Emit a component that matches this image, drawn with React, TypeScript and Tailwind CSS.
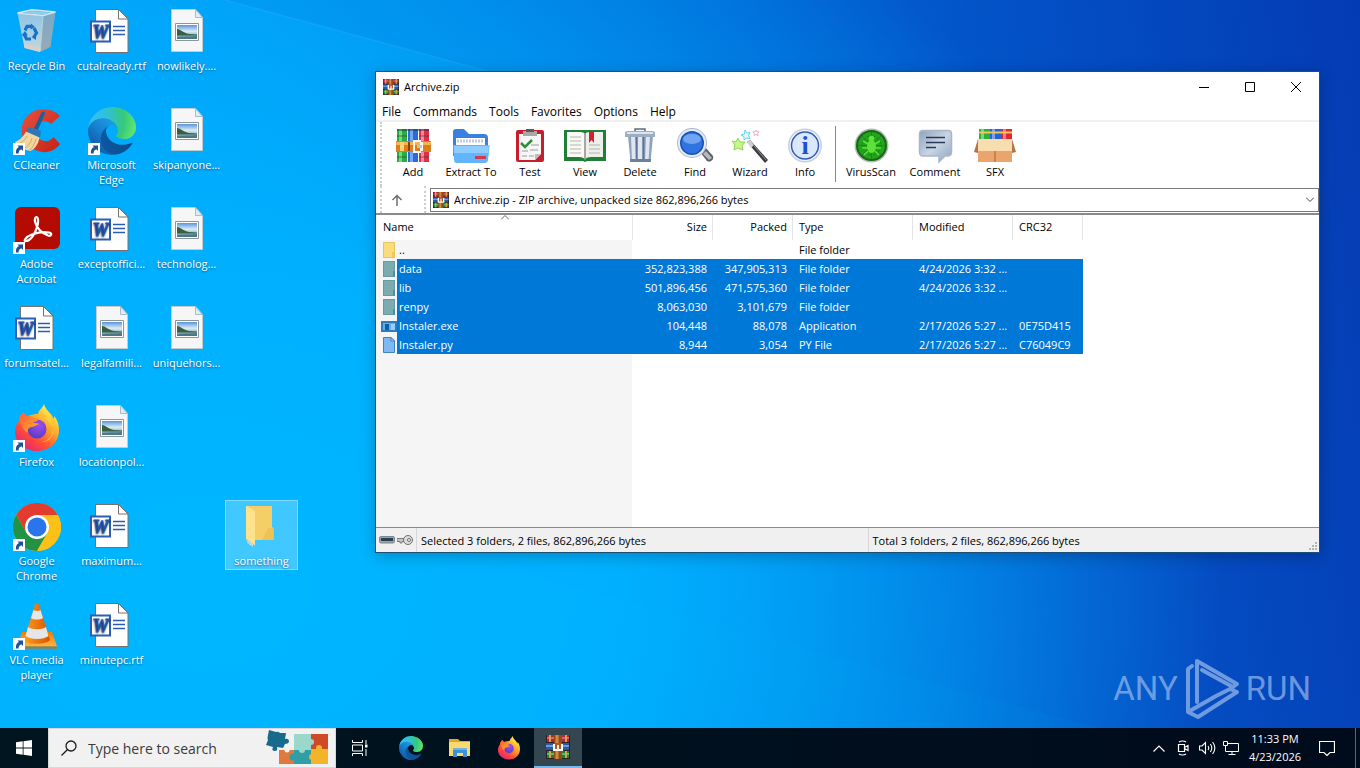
import clsx from "clsx";
import type { ReactNode } from "react";

function Shortcut() {
  return (
    <g>
      <rect x="0" y="36" width="12" height="12" fill="#fff" />
      <path d="M3 46.500c-.5-3 .5-5.500 3-6.500L4.500 38.500H10V44L8.300 42.300C6.500 43 5.500 44.500 5.600 46.500z" fill="#1f5196" />
    </g>
  );
}

function Icon48({ children, shortcut }: { children: ReactNode; shortcut?: boolean }) {
  return (
    <svg viewBox="0 0 48 48" className="h-12 w-12 shrink-0" aria-hidden="true">
      {children}
      {shortcut && <Shortcut />}
    </svg>
  );
}

function RecycleBinIcon() {
  return (
    <Icon48>
      <defs>
        <linearGradient id="binL" x1="0" y1="0" x2="0" y2="1">
          <stop offset="0" stopColor="#8fc4e4" />
          <stop offset="1" stopColor="#c7d6dc" />
        </linearGradient>
        <linearGradient id="binR" x1="0" y1="0" x2="0" y2="1">
          <stop offset="0" stopColor="#79a9c8" />
          <stop offset="1" stopColor="#9aaab3" />
        </linearGradient>
      </defs>
      <path d="M4.500 5 30 7.500 27 44 11.500 40z" fill="url(#binL)" />
      <path d="M30 7.500 42.500 4 37.500 39 27 44z" fill="url(#binR)" />
      <path d="M4.500 5 19 1.800 42.500 4 30 7.500z" fill="#64b0de" stroke="#d6e6ee" strokeWidth="1.400" />
      <path d="M8 5.200 19 3l18 1.500-7 2z" fill="#8ccdf0" />
      <path d="M11 36 27.500 40 27 44 11.500 40z" fill="#dcd0c8" opacity=".8" />
      <path d="M30 8 27.200 43" stroke="#d6e6ee" strokeWidth="1" opacity=".7" />
      <g fill="none" stroke="#0f74d0" strokeWidth="3.200">
        <path d="M12 22.500 14 18.300h5" />
        <path d="M21 20l2.500 5-2.500 4" />
        <path d="M18 31h-4.500l-2.500-5" />
      </g>
      <path d="m18 15.500 4 3.500-4.500 2.500zM23 26v6l-4.500-3zM8.500 27.500 12 23l3 4.500z" fill="#0f74d0" />
    </Icon48>
  );
}

function WordIcon() {
  return (
    <Icon48>
      <path d="M7.500 1.500h23l9.500 9v34h-32.500z" fill="#fff" stroke="#77706c" />
      <path d="M30.500 1.500v9.500h9.500z" fill="#fff" stroke="#77706c" />
      <path d="M25 18.500h12M25 22.500h12M25 26.500h12" stroke="#2a5cb0" strokeWidth="1.300" />
      <path d="M2 12.500h21v22H2z" fill="#2b5eb5" />
      <path d="M4 14.500h17v18H4z" fill="#fff" />
      <text x="12.500" y="30" textAnchor="middle" fontSize="18" fontWeight="bold" fontStyle="italic" fontFamily="Liberation Serif, serif" fill="#2456b0" stroke="#2456b0" strokeWidth="1">W</text>
    </Icon48>
  );
}

function PictureIcon() {
  return (
    <Icon48>
      <defs>
        <linearGradient id="sky" x1="0" y1="0" x2="0" y2="1">
          <stop offset="0" stopColor="#5b94dc" />
          <stop offset=".45" stopColor="#dcecf6" />
          <stop offset=".65" stopColor="#a4c6d8" />
          <stop offset="1" stopColor="#4d7c94" />
        </linearGradient>
      </defs>
      <path d="M8.500 1.500h24l7 8v34h-31z" fill="#f6f6f6" stroke="#c4ccd0" />
      <path d="M32.500 1.500v8h7z" fill="#dceefa" stroke="#a9bcc8" />
      <path d="M12.500 15.500h23v17h-23z" fill="#fff" stroke="#8b969c" />
      <path d="M14 17h20v14H14z" fill="url(#sky)" />
      <path d="M14 21c4 .5 6 4 12 5l8 .5v1H14z" fill="#37603f" />
      <path d="M14 29.500c6-1.500 12-.5 20-1.500v3H14z" fill="#4b7884" />
    </Icon48>
  );
}

function CCleanerIcon() {
  return (
    <Icon48 shortcut>
      <defs>
        <linearGradient id="ccRed" x1="0" y1="0" x2="1" y2="1">
          <stop offset="0" stopColor="#e8513d" />
          <stop offset="1" stopColor="#c42218" />
        </linearGradient>
      </defs>
      <path d="M47 9 38 17c-5-5-13-3-15 4-1.500 8 5 14 11 13 3-.5 5-2 6.500-4L47 37c-5 7-14 10-22 7C13 40 7 30 9 19 12 6 23 1 34 2.500c5 .5 10 3 13 6.500z" fill="url(#ccRed)" />
      <path d="M28.500 5.500c1-2 4-1 3.500 1L25 23l-4-1.500z" fill="#1d5f9c" />
      <path d="m16 20 12 4-1 7-14-6z" fill="#2b78b8" />
      <path d="m13 24.500 13.500 6c-1 6-4 11-9 13.500C12 43 5 40 2 35c5-2 8-5 11-10.500z" fill="#f3d5a0" />
      <path d="M14 29c-2 4-5 6-8 8M19 31c-1 5-4 8-7 10M23 32c-1 4-3 8-6 11" stroke="#d9aa60" fill="none" />
    </Icon48>
  );
}

function EdgeMark() {
  return (
    <>
      <defs>
        <linearGradient id="edgeA" x1="63" y1="178" x2="242" y2="178" gradientUnits="userSpaceOnUse">
          <stop offset="0" stopColor="#0c59a4" />
          <stop offset="1" stopColor="#114a8b" />
        </linearGradient>
        <linearGradient id="edgeB" x1="157" y1="100" x2="46" y2="222" gradientUnits="userSpaceOnUse">
          <stop offset="0" stopColor="#1b9de2" />
          <stop offset=".5" stopColor="#1680cf" />
          <stop offset="1" stopColor="#0f5fae" />
        </linearGradient>
        <radialGradient id="edgeC" cx="30" cy="70" r="240" gradientUnits="userSpaceOnUse">
          <stop offset="0" stopColor="#35c1f1" />
          <stop offset=".3" stopColor="#2fc0e0" />
          <stop offset=".7" stopColor="#36c97b" />
          <stop offset="1" stopColor="#66eb6e" />
        </radialGradient>
      </defs>
      <g transform="translate(-4.63 -4.92)">
        <path d="M235.680 195.460a93.730 93.730 0 0 1-10.540 4.710 101.870 101.870 0 0 1-35.900 6.460c-47.320 0-88.540-32.550-88.540-74.320A31.480 31.480 0 0 1 117.130 105c-42.800 1.800-53.800 46.400-53.800 72.530 0 73.880 68.090 81.370 82.760 81.370 7.910 0 19.840-2.300 27-4.560l1.310-.44a128.340 128.340 0 0 0 66.600-52.800 4 4 0 0 0-5.320-5.640Z" fill="url(#edgeA)" />
        <path d="M110.340 246.340A79.200 79.200 0 0 1 87.600 225a80.720 80.720 0 0 1 29.530-120c3.120-1.470 8.450-4.130 15.540-4a32.350 32.350 0 0 1 25.690 13 31.880 31.880 0 0 1 6.360 18.660c0-.21 24.460-79.600-80-79.600-43.900 0-80 41.660-80 78.210a130.150 130.150 0 0 0 12.110 56 128 128 0 0 0 156.380 67.110 75.550 75.550 0 0 1-62.780-8Z" fill="url(#edgeB)" />
        <path d="M156.940 153.780c-.81 1.050-3.300 2.500-3.300 5.660 0 2.610 1.700 5.120 4.720 7.230 14.380 10 41.490 8.680 41.560 8.680a59.560 59.560 0 0 0 30.270-8.350 61.380 61.380 0 0 0 30.430-52.880c.26-22.410-8-37.310-11.340-43.910C228.090 28.760 182.350 4.920 132.610 4.920a128 128 0 0 0-128 126.200c.48-36.540 36.800-66.050 80-66.050 3.500 0 23.460.34 42 10.070 16.340 8.580 24.900 18.940 30.850 29.210 6.180 10.670 7.280 24.150 7.280 29.520s-2.740 13.330-7.800 19.910Z" fill="url(#edgeC)" />
      </g>
    </>
  );
}

function EdgeIcon() {
  return (
    <Icon48 shortcut>
      <g transform="scale(.1875)">
        <EdgeMark />
      </g>
    </Icon48>
  );
}

function AcrobatIcon() {
  return (
    <Icon48 shortcut>
      <rect x="2" y="1" width="45" height="42" rx="6" fill="#b30b00" />
      <path d="M13 35c-3 1-1-4 6-6.500 6-2 12-3 17-2 4 1 2 4-1 3-6-2-12-8-13-14-.8-5 2.500-6 3-2 .8 6-4 17-9 20.500-1.200.8-2 1-3 1z" fill="none" stroke="#fff" strokeWidth="2.200" strokeLinejoin="round" />
    </Icon48>
  );
}

function FirefoxMark() {
  return (
    <>
      <defs>
        <linearGradient id="fxBody" x1=".85" y1=".1" x2=".2" y2="1">
          <stop offset="0" stopColor="#fff04a" />
          <stop offset=".35" stopColor="#ffa62b" />
          <stop offset=".65" stopColor="#ff5033" />
          <stop offset="1" stopColor="#e61e7c" />
        </linearGradient>
        <radialGradient id="fxCore" cx=".6" cy=".3" r=".8">
          <stop offset="0" stopColor="#a24bf0" />
          <stop offset="1" stopColor="#4a3ec0" />
        </radialGradient>
        <linearGradient id="fxHead" x1="0" y1="0" x2="1" y2="1">
          <stop offset="0" stopColor="#ff5a36" />
          <stop offset="1" stopColor="#ffb52b" />
        </linearGradient>
      </defs>
      <path d="M31 0c-1 4-5 5-6 10-6 0-9 2-11 2-3-1-3-3-3-4-4 3-5 6-5 9-3 3-4 8-4 11 0 11 10 19 22 19 13 0 22-9 22-21 0-6-2-11-5-14 0 2 0 2-.5 3C39 9 33 7 31 0z" fill="url(#fxBody)" />
      <circle cx="24" cy="25" r="9.500" fill="url(#fxCore)" />
      <path d="M7 17c0-4 2-7 4-9 1 3 3 4 5 4 3 1 6 1 9 5-2 0-4 1-5 2 3 0 5 0 6 1-3 1-5 3-8 3-3 1-4 3-3 6-5-3-7-8-8-12z" fill="url(#fxHead)" />
      <path d="M31 0c-2 6 9 13 9 25 0 9-8 14-15 13 10 2 17-6 15-14-1-6-6-9-9-11 2 0 5 1 7 4C35 11 27 8 31 0z" fill="#ffe04a" opacity=".7" />
    </>
  );
}

function FirefoxIcon() {
  return (
    <Icon48 shortcut>
      <FirefoxMark />
    </Icon48>
  );
}

function ChromeIcon() {
  return (
    <Icon48 shortcut>
      <circle cx="24" cy="24" r="24" fill="#fbc116" />
      <path d="M24 24 44.800 12A24 24 0 0 0 3.200 12l10.400 18z" fill="#e33b2e" />
      <path d="M3.200 12A24 24 0 0 0 24 48l10.400-18L24 24 13.600 30z" fill="#229342" />
      <path d="M24 12h20.800A24 24 0 0 1 24 48l10.400-18z" fill="#fbc116" />
      <circle cx="24" cy="24" r="12" fill="#fff" />
      <circle cx="24" cy="24" r="9.500" fill="#2a74ec" />
    </Icon48>
  );
}

function VlcIcon() {
  return (
    <Icon48 shortcut>
      <defs>
        <linearGradient id="vlcBase" x1="0" y1="0" x2="0" y2="1">
          <stop offset="0" stopColor="#f47b00" />
          <stop offset="1" stopColor="#ffb53a" />
        </linearGradient>
        <linearGradient id="vlcCone" x1="0" y1="0" x2="1" y2="0">
          <stop offset="0" stopColor="#ff9c1f" />
          <stop offset="1" stopColor="#d95300" />
        </linearGradient>
      </defs>
      <path d="M9 30h30l5 14.500H4z" fill="url(#vlcBase)" />
      <path d="M4 44.500h40V46.500H4z" fill="#d06a0c" />
      <path d="M22 2.500c1-1.500 3-1.500 4 0L37 38c-5 5-21 5-26 0z" fill="url(#vlcCone)" />
      <path d="m20.500 8-2.500 8c3 2 9 2 12 0L27.500 8c-2 1.200-5 1.200-7 0zM15 25l-2.500 9c5 4 18 4 23 0L33 25c-4 3-14 3-18 0z" fill="#e6e6e6" />
    </Icon48>
  );
}

function FolderIcon() {
  return (
    <Icon48>
      <path d="M8 3h26v21l1.500 1v12H16z" fill="#f4cf68" />
      <path d="M30 25h5.500v12H24z" fill="#eec257" />
      <path d="m8 3 9 5v34.500L8 36z" fill="#ffe28c" />
      <path d="M8.500 37 15 41v3l-2-2-1 1-1-3-1 1z" fill="#bfdcf0" />
    </Icon48>
  );
}

// Three stacked books with a belt, shared by the title bar, address bar and taskbar.
function WinRarIcon({ className }: { className: string }) {
  return (
    <svg viewBox="0 0 24 24" className={className} aria-hidden="true">
      <path d="M0 0h24v24H0z" fill="#2a2026" />
      <path d="M1 0h22v7H1z" fill="#b0263c" />
      <path d="M1 2h22v2H1z" fill="#e0607a" />
      <path d="M0 8h23v7H0z" fill="#2c58a8" />
      <path d="M0 10h23v2H0z" fill="#6d9be0" />
      <path d="M1 16h22v7H1z" fill="#237f38" />
      <path d="M1 18h22v2H1z" fill="#55bd62" />
      <path d="M3 0h2v7H3zM19 0h2v7h-2zM3 16h2v7H3zM19 16h2v7h-2z" fill="#d9a33a" />
      <path d="M8 0h8v24H8z" fill="#8f4a1f" />
      <path d="M9.500 0h3v24h-3z" fill="#d48a3c" />
      <path d="M7 9h2v6H7zM15 9h2v6h-2zM7 14h10v2H7z" fill="#fff" />
      <path d="M9 8h6v6H9z" fill="#a85a28" />
      <path d="M11 10h2v5h-2z" fill="#ffe9c0" />
    </svg>
  );
}

function ToolIcon({ children }: { children: ReactNode }) {
  return (
    <svg viewBox="0 0 40 36" className="h-9 w-10" aria-hidden="true">
      {children}
    </svg>
  );
}

const toolbar = [
  {
    label: "Add",
    width: "w-[54px]",
    icon: (
      <ToolIcon>
        <path d="M4 1h10v33H4z" fill="#2fa846" />
        <path d="M6 1h3v33H6z" fill="#6fdc77" />
        <path d="M15 1h10v33H15z" fill="#2c6ad8" />
        <path d="M17 1h3v33h-3z" fill="#74aaf5" />
        <path d="M26 1h10v33H26z" fill="#e02e4a" />
        <path d="M28 1h3v33h-3z" fill="#ff8a9b" />
        <path d="M4 2h32" stroke="#1d2a3a" strokeOpacity=".45" strokeWidth="2" />
        <path d="M4 8h10M26 8h10M4 29h10M26 29h10" stroke="#17452a" strokeOpacity=".4" strokeWidth="1.500" />
        <path d="M3 13h35v11H3z" fill="#d9801c" />
        <path d="M3 14h35v3H3z" fill="#f6b550" />
        <path d="M7 14h4v9H7z" fill="#ffd27a" />
        <path d="M20 12h8v2h-6v9h6v2h-8zM27 14h3v9h-3z" fill="#f7f7f7" />
        <path d="M24 17h5v3h-5z" fill="#c4c4c4" />
        <path d="M15 14h2v9h-2z" fill="#8a3f0b" />
      </ToolIcon>
    ),
  },
  {
    label: "Extract To",
    width: "w-[62px]",
    icon: (
      <ToolIcon>
        <path d="M2 4q0-3 3-3h8l5 5h15q4 0 4 4v18H2z" fill="#3b7fe0" />
        <path d="M5 10h29v10H5z" fill="#fff" />
        <path d="M6 13h27" stroke="#bfcbd8" strokeWidth="3" strokeDasharray="2 1" />
        <path d="M2 17h35q2 0 1.500 2L37 32q-.4 3-3 3H6q-3 0-3-3z" fill="#63b4fa" />
        <path d="M3 18h35l-.8 7H3z" fill="#8fccff" />
        <path d="M24 28h11v3H24z" fill="#d8384c" />
      </ToolIcon>
    ),
  },
  {
    label: "Test",
    width: "w-[56px]",
    icon: (
      <ToolIcon>
        <rect x="6" y="2" width="28" height="32" rx="2" fill="#c81e2c" />
        <path d="M9 6h22v20l-6 6H9z" fill="#f6f6f6" />
        <path d="M31 26h-6v6z" fill="#bdbdbd" />
        <path d="M13 3h14v5H13z" fill="#a8a8a8" />
        <path d="M16 1h8v3h-8z" fill="#5a5a5a" />
        <path d="m11 15 4 4 7-7" stroke="#2d8d38" strokeWidth="2.500" fill="none" />
        <path d="M21 17h8M12 23h6M20 22h8M12 28h5M19 28h5" stroke="#9a9a9a" />
      </ToolIcon>
    ),
  },
  {
    label: "View",
    width: "w-[54px]",
    icon: (
      <svg viewBox="0 0 44 36" className="h-9 w-11" aria-hidden="true">
        <path d="M1 2h42v31H24l-2 1-2-1H1z" fill="#1e7f37" />
        <path d="M4 4h13q5 0 5 3v24q-2-2-6-2H4z" fill="#f9f9f6" />
        <path d="M40 4H27q-5 0-5 3v24q2-2 6-2h12z" fill="#efefea" />
        <path d="M22 6v26" stroke="#8e8e88" strokeWidth="1.500" />
        <path d="M7 9h11M7 13h11M7 17h11M7 21h11M7 25h11M26 17h11M26 21h11M26 25h11" stroke="#b4b4ae" />
        <path d="M26 3h5v12l-2.500-3L26 15z" fill="#cf2231" />
      </svg>
    ),
  },
  {
    label: "Delete",
    width: "w-[56px]",
    icon: (
      <ToolIcon>
        <path d="M8 8h25l-2.500 26h-20z" fill="#8fa2bc" />
        <path d="M11 8h4l1 26h-4zM18 8h4v26h-4zM26 8h4l-1.500 26H25z" fill="#dde6f1" />
        <path d="M16.500 9v24M23.500 9v24" stroke="#5f7390" strokeWidth="1.500" />
        <path d="M5 5q0-2 3-2h24q3 0 3 2v4H5z" fill="#9daec4" />
        <path d="M7 4h26v2H7z" fill="#dce4ee" />
        <path d="M15 3V1h10v2" stroke="#5f6b7c" strokeWidth="1.500" fill="none" />
        <path d="M10 31h21l-.4 3H10.400z" fill="#6b7f9b" />
      </ToolIcon>
    ),
  },
  {
    label: "Find",
    width: "w-[54px]",
    icon: (
      <ToolIcon>
        <path d="m25 24 5-5 8 9q1 3-2 5-2 1-4 0z" fill="#5c5f66" />
        <path d="m28 26 3-3 6 7-3 2z" fill="#b5bac2" />
        <circle cx="17" cy="15" r="15" fill="#a9b9cf" />
        <circle cx="17" cy="15" r="14" fill="#e6edf5" />
        <circle cx="17" cy="15" r="12" fill="#1d4fb8" />
        <circle cx="17" cy="15" r="10.500" fill="#2f74e0" />
        <ellipse cx="17" cy="11" rx="9" ry="5" fill="#86b5f7" opacity=".75" />
      </ToolIcon>
    ),
  },
  {
    label: "Wizard",
    width: "w-[56px]",
    icon: (
      <ToolIcon>
        <path d="m17 14 3-2 18 20-3 3z" fill="#3c3c40" />
        <path d="m17 14 3-2 4 5-3 3z" fill="#d0d0d4" />
        <path d="m24 18 12 14" stroke="#8c8c92" />
        <path d="m8 10 2 4 5 0-3 4 1 4-5-2-4 2 1-5-3-4 4 1z" fill="#c9f58a" stroke="#8ed455" />
        <path d="m15 2 1.500 3 3.500-.5-1.500 3 1.500 3-3.500-.5-2.500 2v-3.500l-3-1.500 3.500-1z" fill="#e4f9ff" stroke="#63d2ef" />
        <path d="m26 2 .8 1.800 2.200 0-1.500 1.700.7 2.200-2.200-1.200-1.700 1 0-2.300-1.500-1.400 2.300 0z" fill="#fff" stroke="#ecaeb6" />
      </ToolIcon>
    ),
  },
  {
    label: "Info",
    width: "w-[54px]",
    icon: (
      <ToolIcon>
        <circle cx="20" cy="17.500" r="17" fill="#c3cfe2" />
        <circle cx="20" cy="17.500" r="15.500" fill="#eef4fc" />
        <circle cx="20" cy="17.500" r="13.500" fill="#d9e8fb" stroke="#3558b8" strokeWidth="1.500" />
        <text x="20" y="26" textAnchor="middle" fontSize="26" fontWeight="bold" fontFamily="Liberation Serif, serif" fill="#1f4fd0">i</text>
      </ToolIcon>
    ),
  },
  { separator: true },
  {
    label: "VirusScan",
    width: "w-16",
    icon: (
      <ToolIcon>
        <circle cx="20.500" cy="17.500" r="17" fill="#b5bbb5" />
        <circle cx="20.500" cy="17.500" r="15.500" fill="#16681c" />
        <circle cx="20.500" cy="17.500" r="13.500" fill="#23a51b" />
        <path d="M20.500 4v27M7 17.500h27M11 8l19 19M30 8 11 27" stroke="#178a17" />
        <circle cx="20.500" cy="17.500" r="9.500" fill="none" stroke="#178a17" strokeDasharray="3 2" />
        <ellipse cx="20.500" cy="18.500" rx="4.500" ry="6.500" fill="#5fe03c" />
        <circle cx="20.500" cy="10.500" r="2.800" fill="#5fe03c" />
        <path d="m12 13 5 3M29 13l-5 3M11 20h6M30 20h-6M13 27l4-4M28 27l-4-4" stroke="#5fe03c" strokeWidth="1.500" />
      </ToolIcon>
    ),
  },
  {
    label: "Comment",
    width: "w-16",
    icon: (
      <ToolIcon>
        <defs>
          <linearGradient id="bubble" x1="0" y1="0" x2="1" y2="1">
            <stop offset="0" stopColor="#8fa3bd" />
            <stop offset=".5" stopColor="#c8d5e4" />
            <stop offset="1" stopColor="#8fa3bd" />
          </linearGradient>
        </defs>
        <path d="M8 2.500h25q3.500 0 3.500 3.500v18q0 4-4 4H30l-6 6v-6H8q-3.500 0-3.500-4V6q0-3.500 3.500-3.500z" fill="url(#bubble)" stroke="#a9b7ca" strokeWidth="1.500" />
        <path d="M11 9.500h19M11 14.500h19M11 19.500h10" stroke="#2a3a58" strokeWidth="1.500" />
      </ToolIcon>
    ),
  },
  {
    label: "SFX",
    width: "w-[56px]",
    icon: (
      <svg viewBox="0 0 42 36" className="h-9 w-[42px]" aria-hidden="true">
        <path d="M5 1h11v13H5z" fill="#2faf3c" />
        <path d="M16 1h11v13H16z" fill="#2c62d6" />
        <path d="M27 1h11v13H27z" fill="#e02834" />
        <path d="M7 1h3v11H7zM18 1h3v11h-3zM29 1h3v11h-3z" fill="#fff" opacity=".4" />
        <path d="M5 4.500h33" stroke="#f2c94a" strokeWidth="2" />
        <path d="M4 12h34v21H4z" fill="#e0985e" />
        <path d="M4 11h34l3 13H1z" fill="#f7ddb0" />
        <path d="M4 23h34v11H4z" fill="#e9a56d" />
        <path d="M21 23v11" stroke="#c27a42" strokeWidth="1.500" />
        <path d="m4 11-4 13 4 1zM38 11l4 13-4 1z" fill="#b97243" />
      </svg>
    ),
  },
];

const desktop = [
  [
    { label: "Recycle Bin", icon: <RecycleBinIcon /> },
    { label: "CCleaner", icon: <CCleanerIcon /> },
    { label: "Adobe Acrobat", icon: <AcrobatIcon /> },
    { label: "forumsatel...", icon: <WordIcon /> },
    { label: "Firefox", icon: <FirefoxIcon /> },
    { label: "Google Chrome", icon: <ChromeIcon /> },
    { label: "VLC media player", icon: <VlcIcon /> },
  ],
  [
    { label: "cutalready.rtf", icon: <WordIcon /> },
    { label: "Microsoft Edge", icon: <EdgeIcon /> },
    { label: "exceptoffici...", icon: <WordIcon /> },
    { label: "legalfamili...", icon: <PictureIcon /> },
    { label: "locationpol...", icon: <PictureIcon /> },
    { label: "maximum...", icon: <WordIcon /> },
    { label: "minutepc.rtf", icon: <WordIcon /> },
  ],
  [
    { label: "nowlikely....", icon: <PictureIcon /> },
    { label: "skipanyone...", icon: <PictureIcon /> },
    { label: "technolog...", icon: <PictureIcon /> },
    { label: "uniquehors...", icon: <PictureIcon /> },
  ],
  [{ label: "something", icon: <FolderIcon />, selected: true }],
];

const files = [
  { kind: "up", name: "..", size: "", packed: "", type: "File folder", modified: "", crc: "" },
  { kind: "folder", name: "data", size: "352,823,388", packed: "347,905,313", type: "File folder", modified: "4/24/2026 3:32 ...", crc: "" },
  { kind: "folder", name: "lib", size: "501,896,456", packed: "471,575,360", type: "File folder", modified: "4/24/2026 3:32 ...", crc: "" },
  { kind: "folder", name: "renpy", size: "8,063,030", packed: "3,101,679", type: "File folder", modified: "", crc: "" },
  { kind: "exe", name: "Instaler.exe", size: "104,448", packed: "88,078", type: "Application", modified: "2/17/2026 5:27 ...", crc: "0E75D415" },
  { kind: "file", name: "Instaler.py", size: "8,944", packed: "3,054", type: "PY File", modified: "2/17/2026 5:27 ...", crc: "C76049C9" },
];

function FileIcon({ kind }: { kind: string }) {
  return (
    <svg viewBox="0 0 16 16" className="h-4 w-4 shrink-0" aria-hidden="true">
      {kind === "up" && (
        <>
          <path d="M2 0h11v16H2z" fill="#fbdc7c" />
          <path d="M2.500.5h11v15h-11z" fill="none" stroke="#e9c45c" />
          <path d="M11 10h2.500v5.500H11z" fill="#f0c752" />
        </>
      )}
      {kind === "folder" && (
        <>
          <path d="M2 0h12v16H2z" fill="#7bacb0" />
          <path d="M2.500.5h11v15h-11z" fill="none" stroke="#6699a6" />
          <path d="M12 10h2v6h-2z" fill="#4d8f9e" />
        </>
      )}
      {kind === "exe" && (
        <>
          <path d="M0 3h16v11H0z" fill="#2b7cc0" />
          <path d="M2 5h12v7H2z" fill="#63aee8" />
          <path d="M4 6h4v6H4z" fill="#0d5ea8" />
          <path d="M10 7h4M10 9h4M10 11h4" stroke="#d8ecfa" />
        </>
      )}
      {kind === "file" && (
        <>
          <path d="M2.500.5H10L13.500 4v11.500h-11z" fill="#7db9f2" stroke="#3f7fc4" />
          <path d="M10 .5V4h3.500z" fill="#b9dbf9" stroke="#3f7fc4" />
        </>
      )}
    </svg>
  );
}

function ArchiveWindow() {
  return (
    <section className="absolute top-[71px] right-10 bottom-[175px] left-[375px] flex flex-col border border-[#1c4f78] bg-white text-[11px] text-black shadow-[0_3px_14px_rgba(0,0,0,0.25)]">
      <header className="flex h-[30px] items-center pl-[7px]">
        <WinRarIcon className="h-4 w-4" />
        <h1 className="flex-1 pl-[5px]">Archive.zip</h1>
        <div className="flex h-full">
          <button aria-label="Minimize" className="flex w-[46px] items-center justify-center">
            <svg viewBox="0 0 10 10" className="h-[10px] w-[10px]"><path d="M0 5.500h10" stroke="#000" /></svg>
          </button>
          <button aria-label="Maximize" className="flex w-[46px] items-center justify-center">
            <svg viewBox="0 0 10 10" className="h-[10px] w-[10px]"><path d="M.5.5h9v9h-9z" fill="none" stroke="#000" /></svg>
          </button>
          <button aria-label="Close" className="flex w-[46px] items-center justify-center">
            <svg viewBox="0 0 10 10" className="h-[10px] w-[10px]"><path d="m0 0 10 10M10 0 0 10" stroke="#000" /></svg>
          </button>
        </div>
      </header>

      <nav className="flex h-5 items-center border-b-2 border-[#f0f0f0] pt-px text-[12px] leading-4">
        {["File", "Commands", "Tools", "Favorites", "Options", "Help"].map((item) => (
          <button key={item} className="px-[6px]">{item}</button>
        ))}
      </nav>

      <div className="flex h-[64px] pl-1">
        <div className="mr-1 border-l-2 border-dotted border-[#c4ccd4]" />
        {toolbar.map((item) =>
          item.separator ? (
            <div key="sep" className="my-1 mr-[3px] ml-[3px] border-l border-[#8a8a8a]" />
          ) : (
            <button key={item.label} className={clsx("flex flex-col items-center pt-[6px]", item.width)}>
              {item.icon}
              <span className="leading-4 whitespace-nowrap">{item.label}</span>
            </button>
          )
        )}
      </div>

      <div className="flex h-[27px] items-center pl-1">
        <div className="h-full border-l-2 border-dotted border-[#c4ccd4]" />
        <button aria-label="Up one level" className="flex w-[42px] justify-center pr-3">
          <svg viewBox="0 0 12 12" className="h-3 w-3"><path d="M6 12V1.500M1.500 6 6 1.500 10.500 6" fill="none" stroke="#6e6e6e" strokeWidth="1.500" /></svg>
        </button>
        <div className="h-full border-l-2 border-dotted border-[#c4ccd4]" />
        <div className="relative ml-1 flex h-6 flex-1 items-center border border-[#7a7a7a]">
          <WinRarIcon className="ml-[2px] h-4 w-4" />
          <select aria-label="Archive path" className="h-full flex-1 appearance-none pt-px pl-[5px] outline-none">
            <option>Archive.zip - ZIP archive, unpacked size 862,896,266 bytes</option>
          </select>
          <svg viewBox="0 0 8 5" className="pointer-events-none absolute right-1 h-[5px] w-2"><path d="m0 .5 4 4 4-4" fill="none" stroke="#444" /></svg>
        </div>
      </div>

      <div className="flex-1 border-t-2 border-b border-t-[#8a8a8a] border-b-[#8a8a8a] bg-[linear-gradient(90deg,#f5f5f5_256px,#ffffff_256px)]">
        <table className="w-full table-fixed border-separate border-spacing-0 text-left">
          <colgroup>
            <col className="w-[257px]" />
            <col className="w-20" />
            <col className="w-20" />
            <col className="w-[120px]" />
            <col className="w-[100px]" />
            <col className="w-[70px]" />
            <col />
          </colgroup>
          <thead className="bg-white">
            <tr className="h-[25px]">
              <th className="relative border-r border-[#e4e4e4] pl-[7px] font-normal">
                Name
                <svg viewBox="0 0 8 5" className="absolute top-0 left-[125px] h-[5px] w-2"><path d="m0 4.500 4-4 4 4" fill="none" stroke="#666" /></svg>
              </th>
              <th className="border-r border-[#e4e4e4] pr-[5px] text-right font-normal">Size</th>
              <th className="border-r border-[#e4e4e4] pr-[5px] text-right font-normal">Packed</th>
              <th className="border-r border-[#e4e4e4] pl-[6px] font-normal">Type</th>
              <th className="border-r border-[#e4e4e4] pl-[6px] font-normal">Modified</th>
              <th className="border-r border-[#e4e4e4] pl-[6px] font-normal">CRC32</th>
              <td />
            </tr>
          </thead>
          <tbody>
            {files.map((file) => {
              const selected = file.kind !== "up";
              const cell = clsx("pt-px whitespace-nowrap", selected && "bg-[#0078d7] text-white");
              return (
                <tr key={file.name} className="h-[19px]">
                  <td className="p-0">
                    <div className="flex h-[19px] items-center pl-[5px]">
                      <FileIcon kind={file.kind} />
                      <span className={clsx("flex h-full flex-1 items-center pl-[2px]", cell)}>{file.name}</span>
                    </div>
                  </td>
                  <td className={clsx("pr-[6px] text-right", cell)}>{file.size}</td>
                  <td className={clsx("pr-[6px] text-right", cell)}>{file.packed}</td>
                  <td className={clsx("pl-[6px]", cell)}>{file.type}</td>
                  <td className={clsx("pl-[6px]", cell)}>{file.modified}</td>
                  <td className={clsx("pl-[6px]", cell)}>{file.crc}</td>
                  <td />
                </tr>
              );
            })}
          </tbody>
        </table>
      </div>

      <footer className="relative flex h-6 items-center bg-[#f0f0f0]">
        <div className="flex h-full w-[41px] items-center gap-[2px] border-r border-[#d7d7d7] pl-[3px]">
          <svg viewBox="0 0 16 8" className="h-2 w-4" aria-hidden="true">
            <rect x=".5" y=".5" width="15" height="6.500" rx="1.500" fill="#9aa4ae" stroke="#7b8791" />
            <path d="M2 2h12v3H2z" fill="#2b3f4c" />
          </svg>
          <svg viewBox="0 0 16 12" className="h-3 w-4" aria-hidden="true">
            <path d="M0 4.500h8v3H5v1.500H3V7.500H0z" fill="#c7c7c7" stroke="#7c7c7c" />
            <circle cx="11" cy="6" r="4.500" fill="#dcdcdc" stroke="#6f6f6f" />
            <circle cx="12" cy="6" r="1.500" fill="#fff" stroke="#6f6f6f" />
          </svg>
        </div>
        <p className="flex h-full flex-1 items-center border-r border-[#d7d7d7] pt-[3px] pl-1">Selected 3 folders, 2 files, 862,896,266 bytes</p>
        <p className="flex h-full flex-1 items-center pt-[3px] pl-1">Total 3 folders, 2 files, 862,896,266 bytes</p>
        <svg viewBox="0 0 9 9" className="absolute right-px bottom-px h-[9px] w-[9px]" aria-hidden="true">
          <path d="M6 0h2v2H6zM3 3h2v2H3zM6 3h2v2H6zM0 6h2v2H0zM3 6h2v2H3zM6 6h2v2H6z" fill="#b4b4b4" />
        </svg>
      </footer>
    </section>
  );
}

function Watermark() {
  return (
    <div className="absolute right-[49px] bottom-2 flex items-center gap-[6px] font-['Roboto',sans-serif] text-[33px] leading-[62px] text-[#a9c4f0]/65">
      <span>ANY</span>
      <svg viewBox="0 0 56 62" className="h-[62px] w-14" aria-hidden="true">
        <g fill="none" stroke="currentColor" strokeWidth="4" strokeLinejoin="round" strokeLinecap="round">
          <path d="M8 8 4 11v43L32 38M13 44V3l40 23-4 3-31-17M4 54l10 5 39-25-7-3-14 7" />
        </g>
      </svg>
      <span>RUN</span>
    </div>
  );
}

function Taskbar() {
  return (
    <footer className="flex h-10 shrink-0 items-stretch bg-[linear-gradient(90deg,#00151f,#000b1c)] text-white">
      <button aria-label="Start" className="flex w-12 items-center justify-center">
        <svg viewBox="0 0 16 16" className="h-4 w-4"><path d="M0 2.300 6.700 1.300v6.300H0zM7.500 1.200 16 0v7.600H7.500zM0 8.400h6.700v6.300L0 13.700zM7.500 8.400H16V16l-8.500-1.200z" fill="#fff" /></svg>
      </button>
      <label className="flex w-72 items-center border border-[#d8d8d8] bg-[#f1f1f1] pl-3 text-[#3b3b3b]">
        <svg viewBox="0 0 16 16" className="h-4 w-4 shrink-0" aria-hidden="true"><circle cx="10" cy="6" r="5" fill="none" stroke="#1c1c1c" strokeWidth="1.300" /><path d="M6.300 9.700.5 15.500" stroke="#1c1c1c" strokeWidth="1.300" /></svg>
        <input type="text" aria-label="Search" placeholder="Type here to search" className="min-w-0 flex-1 pl-[11px] text-[14px] outline-none placeholder:text-[#3b3b3b]" />
        <svg viewBox="0 0 64 36" className="mr-[6px] h-9 w-16 shrink-0" aria-hidden="true">
          <path d="M14 20h15v14H14z" fill="#e07a3c" />
          <path d="M29 4h17v16H29z" fill="#9ad8cc" />
          <path d="M46 4h17v15H46z" fill="#cf4a26" />
          <path d="M29 20h17v14H29z" fill="#2f9ea6" />
          <path d="M46 19h17v15H46z" fill="#f2b429" />
          <circle cx="46" cy="12" r="3" fill="#9ad8cc" />
          <circle cx="37" cy="20" r="3" fill="#9ad8cc" />
          <circle cx="54" cy="18" r="3" fill="#f2b429" />
          <circle cx="28" cy="27" r="3.500" fill="#2f9ea6" />
          <circle cx="47" cy="27" r="3" fill="#f2b429" />
          <circle cx="22" cy="20" r="2.500" fill="#f1f1f1" />
          <path d="m4 0 7 2q2-1 4 1l6 0-1 6q4-1 4 3-1 2-4 2l-2 4-6-1q1 4-2 4-4 0-2-4l-7-2 2-5q-1-2 0-5z" fill="#176a8c" />
        </svg>
      </label>
      <button aria-label="Task View" className="flex w-12 items-center justify-center">
        <svg viewBox="0 0 16 16" className="h-4 w-4"><path d="M.5 0v2.500h10V0M.5 16v-2.500h10V16M.5 5h10v6H.5zM14 0v4M14 9v7" fill="none" stroke="#fff" /><path d="M13 4.500h2.500v3H13z" fill="#fff" /></svg>
      </button>
      <div className="ml-[3px] flex gap-px">
        <button aria-label="Microsoft Edge" className="flex w-12 items-center justify-center">
          <svg viewBox="0 0 256 256" className="h-6 w-6"><EdgeMark /></svg>
        </button>
        <button aria-label="File Explorer" className="flex w-12 items-center justify-center">
          <svg viewBox="0 0 24 24" className="h-6 w-6"><path d="M1 3h9l2 2h10v4H1z" fill="#e9a32d" /><path d="M1 6h21v14H1z" fill="#fcd96d" /><path d="M5 12h14v9h-4v-4H9v4H5z" fill="#3d92d6" /><path d="M5 12h14v2H5z" fill="#6ab4ea" /></svg>
        </button>
        <button aria-label="Firefox" className="flex w-12 items-center justify-center">
          <svg viewBox="0 0 48 48" className="h-6 w-6"><FirefoxMark /></svg>
        </button>
        <button aria-label="WinRAR" className="flex w-12 items-center justify-center border-b-2 border-[#76b9ed] bg-[#344750]">
          <WinRarIcon className="h-6 w-6" />
        </button>
      </div>

      <div className="ml-auto flex items-center">
        <button aria-label="Show hidden icons" className="flex w-6 justify-center">
          <svg viewBox="0 0 12 7" className="h-[7px] w-3"><path d="m.5 6.500 5.500-5.500 5.500 5.500" fill="none" stroke="#fff" strokeWidth="1.200" /></svg>
        </button>
        <button aria-label="Meet Now" className="flex w-6 justify-center">
          <svg viewBox="0 0 14 16" className="h-4 w-[14px]"><path d="M2.500 4.500h6v7h-6zM8.500 7.500l3.500-2v5l-3.500-2M3 2Q6.500 0 10 2M3 14q3.500 2 7 0" fill="none" stroke="#fff" strokeWidth="1.200" /></svg>
        </button>
        <button aria-label="Volume" className="flex w-6 justify-center">
          <svg viewBox="0 0 17 14" className="h-[14px] w-[17px]"><path d="M.5 5h2.500L6.500 1.500v11L3 9H.5zM9 5q1.500 2 0 4M11.300 3q3 4 0 8M13.600 1q4.500 6 0 12" fill="none" stroke="#fff" strokeWidth="1.100" /></svg>
        </button>
        <button aria-label="Network" className="flex w-6 justify-center">
          <svg viewBox="0 0 16 14" className="h-[14px] w-4"><path d="M5 2.500h10.500v8H2.500V5M5.500 13.500h7M9 10.500v3M.5.500h4v4h-4z" fill="none" stroke="#fff" /></svg>
        </button>
        <div className="w-[60px] pl-1 text-center text-[11px] leading-[18px] whitespace-nowrap">
          <p>11:33 PM</p>
          <p>4/23/2026</p>
        </div>
        <button aria-label="Notifications" className="flex w-12 justify-center">
          <svg viewBox="0 0 16 16" className="h-4 w-4"><path d="M.5 1.500h15v11H11l-3 3-3-3H.5z" fill="none" stroke="#fff" strokeWidth="1.200" /></svg>
        </button>
        <button aria-label="Show desktop" className="ml-1 h-full w-[5px] border-l border-[#5a6672]" />
      </div>
    </footer>
  );
}

export default function App() {
  return (
    <div className="flex h-screen flex-col overflow-hidden font-['Open_Sans','Noto_Sans',sans-serif]">
      <main className="relative flex-1 bg-[radial-gradient(ellipse_75%_110%_at_15%_80%,#00b7ff_0%,#00b0ff_40%,rgba(0,160,250,0)_100%),linear-gradient(82deg,#00a8fc_0%,#0098f2_25%,#0078e0_50%,#0454c8_75%,#053cb4_100%)]">
        <svg viewBox="0 0 1360 728" preserveAspectRatio="none" className="absolute inset-0 h-full w-full" aria-hidden="true">
          <path d="M225 0 520 80H1360V0z" fill="#003cb4" opacity=".07" />
          <path d="M225 0 520 80" stroke="#7fd0ff" strokeOpacity=".12" strokeWidth="1.500" />
          <path d="M0 620 400 540 1100 728H0z" fill="#00c0ff" opacity=".05" />
        </svg>

        <div className="relative flex pt-[6px]">
          {desktop.map((column, i) => (
            <ul key={i} className="grid w-[75px] auto-rows-[99px]">
              {column.map((item) => (
                <li key={item.label} className={clsx("pr-[2px]", item.selected && "row-start-6")}>
                  <button
                    className={clsx(
                      "flex w-full flex-col items-center gap-[2px] pt-[2px] text-[11px] leading-[15px] text-white [text-shadow:0_1px_2px_rgba(0,0,0,0.5)]",
                      item.selected && "-mt-px border border-white/35 bg-white/25"
                    )}
                  >
                    {item.icon}
                    <span className={clsx("pb-px text-center", !item.label.includes(" ") && "whitespace-nowrap")}>{item.label}</span>
                  </button>
                </li>
              ))}
            </ul>
          ))}
        </div>

        <Watermark />
        <ArchiveWindow />
      </main>
      <Taskbar />
    </div>
  );
}
